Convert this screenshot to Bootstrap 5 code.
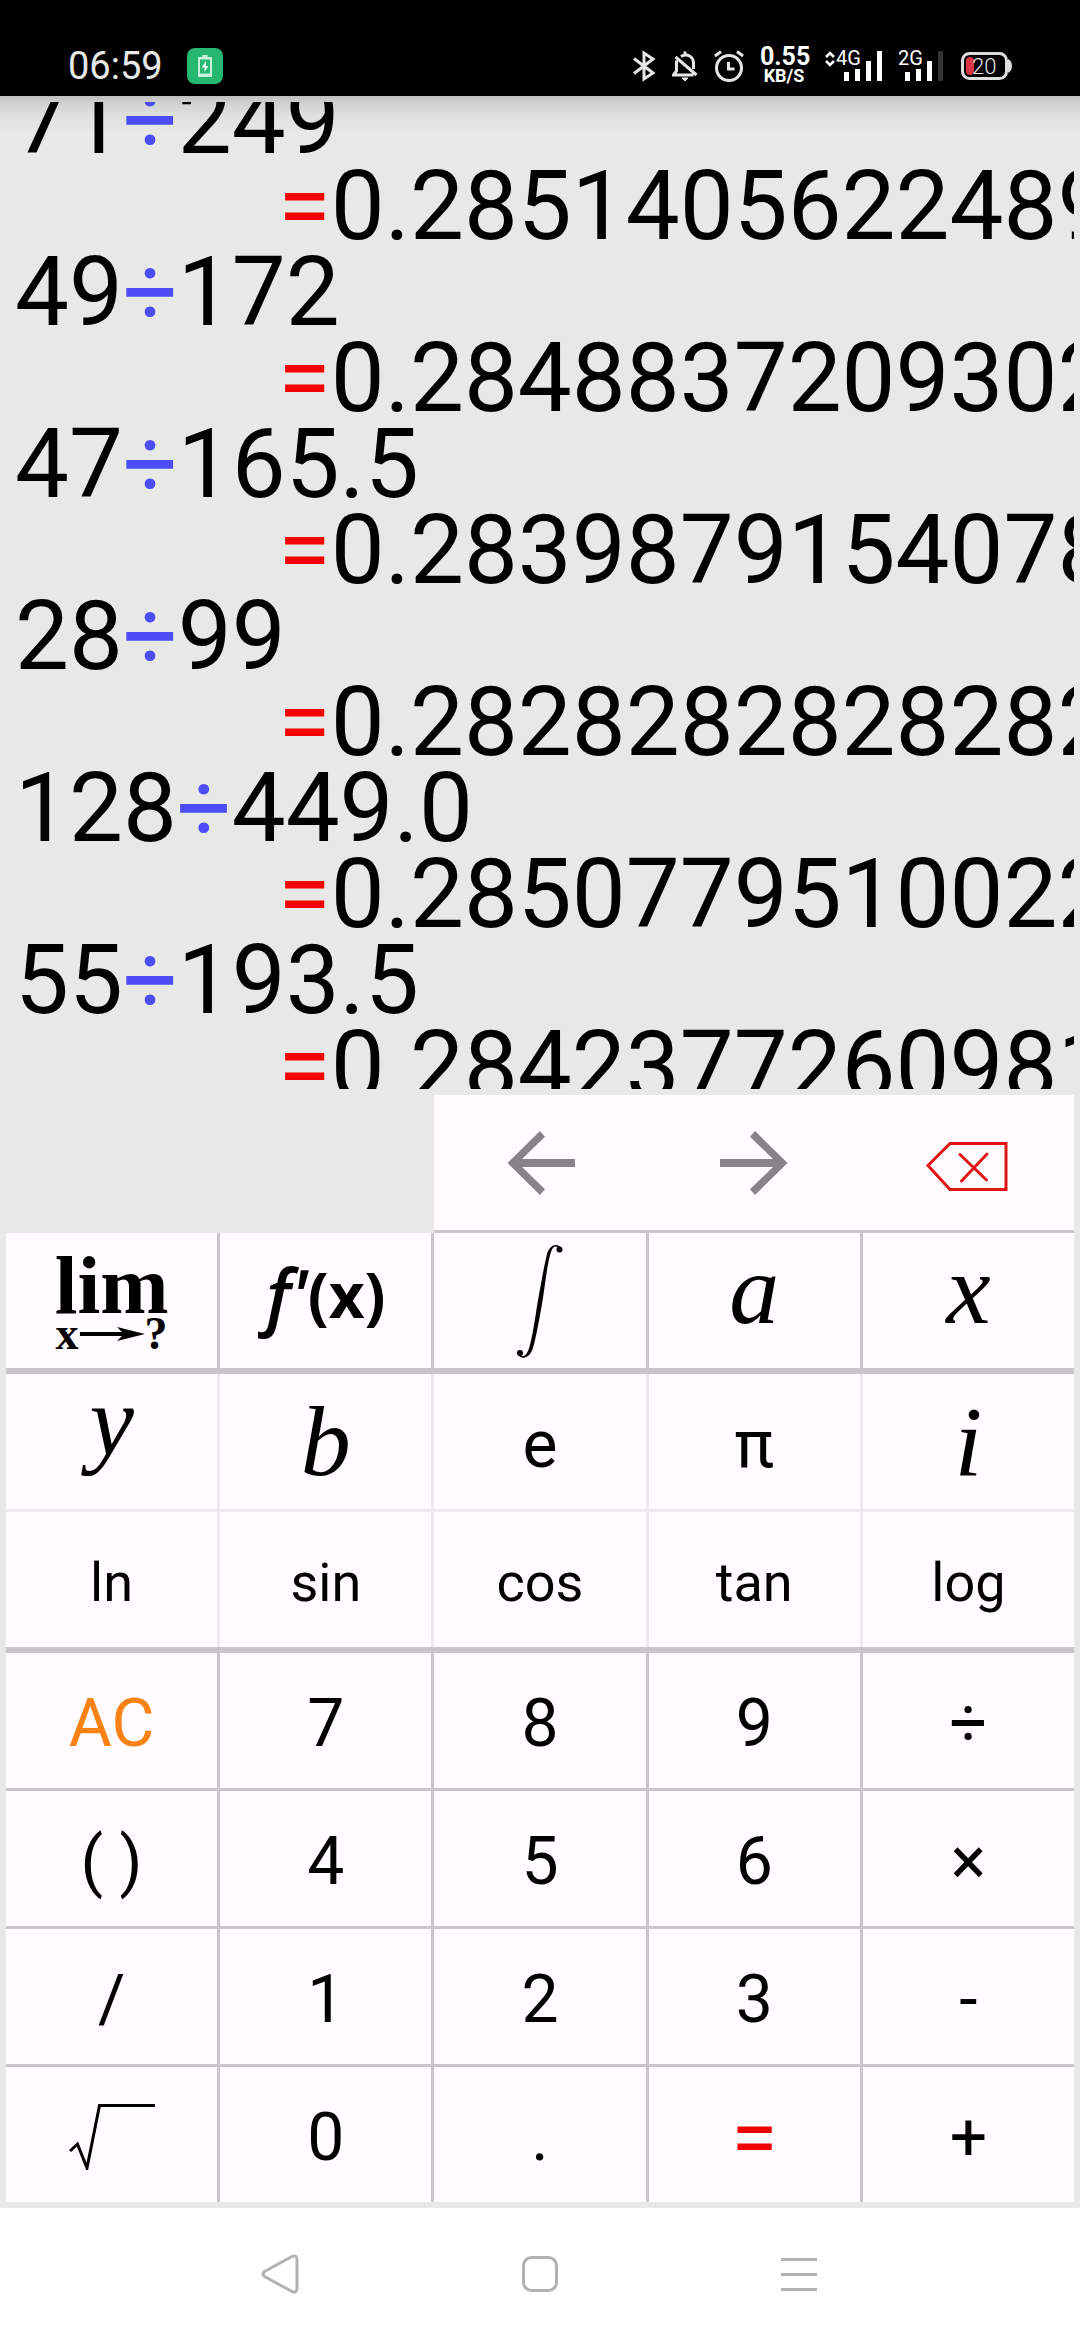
<!DOCTYPE html>
<html lang="en">
<head>
<meta charset="utf-8">
<meta name="viewport" content="width=device-width, initial-scale=1">
<title>Calculator</title>
<link href="https://cdn.jsdelivr.net/npm/bootstrap@5.3.0/dist/css/bootstrap.min.css" rel="stylesheet">
<style>
  body { background: #e8e8e6; color: #000; font-family: Roboto, "Liberation Sans", sans-serif; }
  .statusbar { height: 96px; padding: 36px 68px 0; background: #000; color: #e8e8e8; }
  .clock { font-size: 38px; line-height: 60px; }
  .net-speed { width: 48px; color: #fff; font-weight: 700; text-align: center; }
  .net-rate { font-size: 25px; line-height: 20px; }
  .net-unit { font-size: 18px; line-height: 18px; }
  .statusbar svg text { font-family: Roboto, sans-serif; }

  .history-pane { min-height: 0; padding: 6px; background: linear-gradient(#bfbfbd, #d3d3d1 8px, #e0e0de 20px, #e8e8e6 38px); }
  .history-list { margin-top: -25px; font-size: 96px; line-height: 86px; white-space: nowrap; }
  .expr { padding-left: 9px; }
  .result { padding-left: 272px; }
  .op { color: #4d4df5; }
  .eq { color: #f70000; }

  .keypad { padding: 0 6px 6px; }
  .key-grid { display: grid; grid-template-columns: repeat(5, 1fr); gap: 3px; }
  .edit-keys { grid-column: 3 / 6; border-bottom: 3px solid #c9c5ca; }
  .lines-dark { background: #c9c5ca; }
  .lines-soft { background: #ede9ee; }
  .section-end { border-bottom: 6px solid #c8c6c8; }
  .key { height: 135px; background: #fffbff; color: #000; font-size: 66px; line-height: 78px; padding: 6px 0 0; white-space: pre;
         display: flex; align-items: center; justify-content: center; --bs-btn-hover-color: #000; --bs-btn-active-bg: #ede9ee; }
  .key-fn { font-size: 54px; }
  .key-pic { padding: 0; }
  .key-clear { color: #fa8214; }
  .key-equals { color: #f20000; font-size: 84px; }
  .key-math { font-family: "Liberation Serif", serif; font-style: italic; font-size: 100px; line-height: 112px; padding: 0; }
  .math-low { padding-bottom: 22px; }
  .math-tail { padding-bottom: 40px; }
  .lim-top { font: 700 82px/66px "Liberation Serif", serif; }
  .lim-sub { font: 700 46px/30px "Liberation Serif", serif; }
  .deriv { font-family: "Open Sans", sans-serif; font-weight: 700; font-size: 62px; padding: 0 0 14px; }
  .deriv-f { font-size: 72px; font-style: italic; font-weight: 600; }

  .sysnav { height: 132px; background: #fff; }
  .nav-key { width: 24%; }
</style>
</head>
<body>
<div class="d-flex flex-column vh-100">

  <header class="statusbar d-flex align-items-center justify-content-between flex-shrink-0">
    <div class="d-flex align-items-center">
      <span class="clock">06:59</span>
      <svg class="ms-4" width="36" height="36" viewBox="0 0 36 36" aria-label="Charging">
        <rect width="36" height="36" rx="8" fill="#26b870"/>
        <path d="M15.500 7h5v2h4.500v20h-14V9h4.500z" fill="#c9f2dc"/>
        <rect x="13" y="11.500" width="10" height="14" fill="#26b870"/>
        <path d="M19 13l-4.500 6.500h3V24l4-6h-2.500z" fill="#e6fff2"/>
      </svg>
    </div>
    <div class="d-flex align-items-center gap-3">
      <svg width="24" height="32" viewBox="0 0 24 32" fill="none" stroke="#e6e6e6" stroke-width="3" aria-label="Bluetooth"><path d="M2 8.500l19 14.500-9 6V3l9 6L2 23.500"/></svg>
      <svg width="26" height="32" viewBox="0 0 26 32" fill="none" stroke="#e6e6e6" stroke-width="3" aria-label="Muted"><path d="M9 6.500C15 2.500 21.500 7 21.500 13v6M4.500 10.500V21L1.500 25h20M3.500 7l21 18M13 1.500V5"/><path d="M10 28h6l-3 3z" fill="#e6e6e6" stroke-width="1"/></svg>
      <svg width="30" height="32" viewBox="0 0 30 32" fill="none" stroke="#e6e6e6" stroke-width="3" aria-label="Alarm"><circle cx="15" cy="18" r="12.500"/><path d="M14.500 12v7h6M1 6l6-4.500M29 6l-6-4.500"/></svg>
      <div class="net-speed"><div class="net-rate">0.55</div><div class="net-unit">KB/S</div></div>
      <svg width="58" height="32" viewBox="0 0 58 32" fill="#fff" aria-label="4G signal">
        <path d="M2 7l4-4 4 4M2 11l4 4 4-4" fill="none" stroke="#fff" stroke-width="2.500"/>
        <text x="12" y="15" font-size="20">4G</text>
        <path d="M20 22h5v9h-5zM31 19h5v12h-5zM42 11h5v20h-5zM53 1h5v30h-5z"/>
      </svg>
      <svg width="46" height="32" viewBox="0 0 46 32" fill="#fff" aria-label="2G signal">
        <text x="0" y="15" font-size="20">2G</text>
        <path d="M7 22h5v9H7zM18 19h5v12h-5zM29 11h5v20h-5z"/><path d="M40 1h5v30h-5z" fill="#333"/>
      </svg>
      <svg width="52" height="32" viewBox="0 0 52 32" aria-label="Battery">
        <rect x="2.500" y="3.500" width="44" height="25" rx="7" fill="none" stroke="#dedede" stroke-width="3"/>
        <path d="M48 9q4 2 4 7t-4 7z" fill="#dedede"/><rect x="6" y="7" width="8" height="18" rx="4" fill="#dc3545"/>
        <text x="12" y="24" font-size="22" font-weight="300" fill="#e8e8e8">20</text>
      </svg>
    </div>
  </header>

  <main class="history-pane flex-grow-1 d-flex flex-column">
    <div class="overflow-hidden flex-grow-1">
      <div class="history-list">
        <div class="expr">71<span class="op">÷</span>249</div>
        <div class="result"><span class="eq">=</span>0.2851405622489</div>
        <div class="expr">49<span class="op">÷</span>172</div>
        <div class="result"><span class="eq">=</span>0.2848837209302</div>
        <div class="expr">47<span class="op">÷</span>165.5</div>
        <div class="result"><span class="eq">=</span>0.2839879154078</div>
        <div class="expr">28<span class="op">÷</span>99</div>
        <div class="result"><span class="eq">=</span>0.2828282828282</div>
        <div class="expr">128<span class="op">÷</span>449.0</div>
        <div class="result"><span class="eq">=</span>0.2850779510022</div>
        <div class="expr">55<span class="op">÷</span>193.5</div>
        <div class="result"><span class="eq">=</span>0.2842377260981</div>
      </div>
    </div>
  </main>

  <section class="keypad flex-shrink-0">
    <div class="key-grid">
      <div class="edit-keys d-flex">
        <button type="button" class="btn key key-pic col border-0 rounded-0" aria-label="Move left">
          <svg width="68" height="64" viewBox="0 0 68 64" fill="#878388"><path d="M68 28H15L38 5.700 33 0 .500 32 33 64l5-5.700L15 36h53z"/></svg></button>
        <button type="button" class="btn key key-pic col border-0 rounded-0" aria-label="Move right">
          <svg width="68" height="64" viewBox="0 0 68 64" fill="#878388"><path d="M0 28h53L30 5.700 35 0l32.500 32L35 64l-5-5.700L53 36H0z"/></svg></button>
        <button type="button" class="btn key key-pic col border-0 rounded-0" aria-label="Delete">
          <svg width="84" height="64" viewBox="0 0 84 64" fill="none" stroke="#e01414" stroke-width="3"><path d="M3 34.500l22-22h56v46H25z"/><path d="M35 23.500L61.500 49M62 23L36.500 50" stroke-linecap="round"/></svg></button>
      </div>
    </div>

    <div class="key-grid lines-dark section-end">
      <button type="button" class="btn key key-pic flex-column border-0 rounded-0">
        <span class="lim-top">lim</span>
        <span class="lim-sub d-flex align-items-center">x<svg width="66" height="14" viewBox="0 0 66 14"><path d="M1 5h42L38 0l28 7-28 7 5-5H1z"/></svg>?</span></button>
      <button type="button" class="btn key deriv border-0 rounded-0"><span class="deriv-f">f'</span>(x)</button>
      <button type="button" class="btn key key-pic border-0 rounded-0" aria-label="Integral">
        <svg width="48" height="114" viewBox="0 0 48 114"><path d="M45 3.500C41-1 34 0 31 10c-3 12-7 35-10 52-3 20-6 38-9 45-2.500 6-6 6-9 3.500L3 112c5 4 11 1 14-8 3-10 7-32 10-50 2-14 5-38 8-46 2-6 5-7 8-3z"/><circle cx="43.500" cy="5.500" r="3"/><circle cx="4" cy="109" r="3"/></svg></button>
      <button type="button" class="btn key key-math math-low border-0 rounded-0">a</button>
      <button type="button" class="btn key key-math math-low border-0 rounded-0">x</button>
    </div>

    <div class="key-grid lines-soft section-end">
      <button type="button" class="btn key key-math math-tail border-0 rounded-0">y</button>
      <button type="button" class="btn key key-math border-0 rounded-0">b</button>
      <button type="button" class="btn key border-0 rounded-0">e</button>
      <button type="button" class="btn key border-0 rounded-0">π</button>
      <button type="button" class="btn key key-math border-0 rounded-0">i</button>
      <button type="button" class="btn key key-fn border-0 rounded-0">ln</button>
      <button type="button" class="btn key key-fn border-0 rounded-0">sin</button>
      <button type="button" class="btn key key-fn border-0 rounded-0">cos</button>
      <button type="button" class="btn key key-fn border-0 rounded-0">tan</button>
      <button type="button" class="btn key key-fn border-0 rounded-0">log</button>
    </div>

    <div class="key-grid lines-dark">
      <button type="button" class="btn key key-clear border-0 rounded-0">AC</button>
      <button type="button" class="btn key border-0 rounded-0">7</button>
      <button type="button" class="btn key border-0 rounded-0">8</button>
      <button type="button" class="btn key border-0 rounded-0">9</button>
      <button type="button" class="btn key border-0 rounded-0">÷</button>
      <button type="button" class="btn key border-0 rounded-0">( )</button>
      <button type="button" class="btn key border-0 rounded-0">4</button>
      <button type="button" class="btn key border-0 rounded-0">5</button>
      <button type="button" class="btn key border-0 rounded-0">6</button>
      <button type="button" class="btn key border-0 rounded-0">×</button>
      <button type="button" class="btn key border-0 rounded-0">/</button>
      <button type="button" class="btn key border-0 rounded-0">1</button>
      <button type="button" class="btn key border-0 rounded-0">2</button>
      <button type="button" class="btn key border-0 rounded-0">3</button>
      <button type="button" class="btn key border-0 rounded-0">-</button>
      <button type="button" class="btn key key-pic border-0 rounded-0" aria-label="Square root">
        <svg width="86" height="70" viewBox="0 0 86 70" fill="none" stroke="#000" stroke-width="3"><path d="M1 51l7.500-7L18 68 30.500 5.500H86"/></svg></button>
      <button type="button" class="btn key border-0 rounded-0">0</button>
      <button type="button" class="btn key border-0 rounded-0">.</button>
      <button type="button" class="btn key key-equals border-0 rounded-0">=</button>
      <button type="button" class="btn key border-0 rounded-0">+</button>
    </div>
  </section>

  <nav class="sysnav d-flex justify-content-center flex-shrink-0">
    <button type="button" class="btn nav-key border-0" aria-label="Back"><svg width="40" height="42" viewBox="0 0 40 42" fill="none" stroke="#b2b2b2" stroke-width="3" stroke-linejoin="round"><path d="M3.500 18.500L31 3.500q5-2 5 3v29q0 5-5 3L3.500 23.500q-3-2.500 0-5z"/></svg></button>
    <button type="button" class="btn nav-key border-0" aria-label="Home"><svg width="36" height="36" viewBox="0 0 36 36" fill="none" stroke="#b2b2b2" stroke-width="3"><rect x="1.500" y="1.500" width="33" height="33" rx="8"/></svg></button>
    <button type="button" class="btn nav-key border-0" aria-label="Recent apps"><svg width="36" height="36" viewBox="0 0 36 36" stroke="#b2b2b2" stroke-width="3"><path d="M0 3.500h36M0 18.500h36M0 33.500h36"/></svg></button>
  </nav>
</div>
<script src="https://cdn.jsdelivr.net/npm/bootstrap@5.3.0/dist/js/bootstrap.bundle.min.js"></script>
</body>
</html>
